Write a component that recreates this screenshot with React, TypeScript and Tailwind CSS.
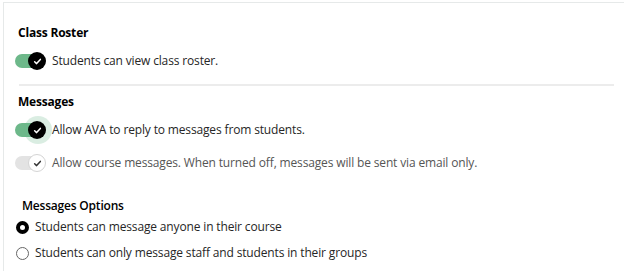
import React from "react";

function Check({ color }: { color: string }) {
  return (
    <svg viewBox="0 0 12 12" className="w-[9px] h-[9px]" fill="none">
      <path d="M2.2 6.4 L4.8 8.8 L9.8 3.2" stroke={color} strokeWidth="2" strokeLinecap="round" strokeLinejoin="round" />
    </svg>
  );
}

function Toggle({ on, focus, muted }: { on: boolean; focus?: boolean; muted?: boolean }) {
  return (
    <div className="relative w-[31px] h-[18px] flex items-center shrink-0">
      <div className={`w-[30px] h-[14px] rounded-full ${muted ? "bg-[#e3e3e3]" : on ? "bg-[#6db88a]" : "bg-[#ccc]"}`} />
      {focus && <div className="absolute right-[-6px] top-[-5px] w-[28px] h-[28px] rounded-full bg-[#6db88a]/25" />}
      <div className={`absolute right-0 top-0 w-[18px] h-[18px] rounded-full flex items-center justify-center ${muted ? "bg-white border border-[#d4d4d4]" : "bg-black"}`}>
        <Check color={muted ? "#333" : "#fff"} />
      </div>
    </div>
  );
}

export default function App() {
  return (
    <div className="w-[624px] h-[271px] bg-white overflow-hidden" style={{ fontFamily: '"Open Sans", sans-serif' }}>
      <div className="ml-[3px] mt-[2px] h-full border-l border-t border-[#e6e9e9] pl-[11px] pr-[10px] text-[#262626] text-[12px] tracking-[-0.15px]">
        <div className="pt-[21px] pl-[3px] font-bold text-black tracking-[-0.2px]">Class Roster</div>
        <div className="mt-[10px] flex items-center gap-[6px]">
          <Toggle on />
          <span>Students can view class roster.</span>
        </div>
        <div className="mt-[14px] ml-[4px] border-t-2 border-[#ececec]" />
        <div className="pt-[7px] pl-[3px] font-bold text-black tracking-[-0.2px]">Messages</div>
        <div className="mt-[10px] flex items-center gap-[6px]">
          <Toggle on focus />
          <span>Allow AVA to reply to messages from students.</span>
        </div>
        <div className="mt-[15px] flex items-center gap-[6px] text-[#555]">
          <Toggle on muted />
          <span>Allow course messages. When turned off, messages will be sent via email only.</span>
        </div>
        <div className="pt-[25px] pl-[7px] font-semibold text-black tracking-[-0.2px]">Messages Options</div>
        <div className="mt-[3px] pl-[1px] flex items-center gap-[6px]">
          <span className="w-[13px] h-[13px] rounded-full border-[4px] border-black bg-white shrink-0" />
          <span>Students can message anyone in their course</span>
        </div>
        <div className="mt-[8px] pl-[1px] flex items-center gap-[6px]">
          <span className="w-[13px] h-[13px] rounded-full border border-[#666] bg-white shrink-0" />
          <span>Students can only message staff and students in their groups</span>
        </div>
      </div>
    </div>
  );
}
